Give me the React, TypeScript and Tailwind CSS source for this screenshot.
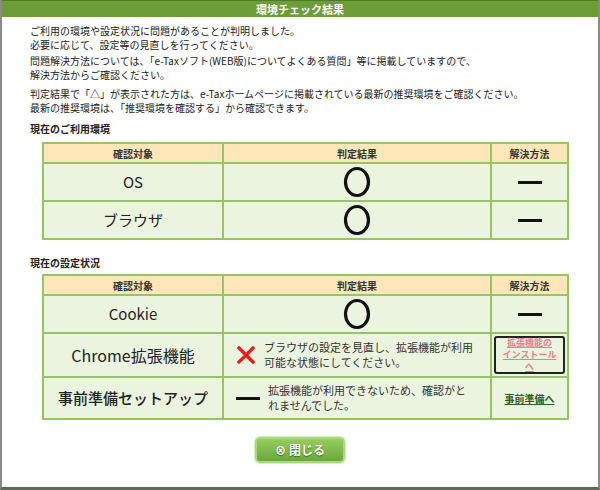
import React from "react";

const jp = { fontFamily: '"Noto Sans CJK JP", "Noto Sans", sans-serif' };

function Circle() {
  return (
    <svg width="30" height="32" viewBox="0 0 30 32" className="mx-auto block">
      <ellipse cx="15" cy="16" rx="11.5" ry="13.5" fill="none" stroke="#111" strokeWidth="3.2" />
    </svg>
  );
}

function Dash({ className = "" }: { className?: string }) {
  return <div className={"h-[3px] w-[24px] bg-[#111] " + className} />;
}

function Cross() {
  return (
    <svg width="20" height="20" viewBox="0 0 20 20" className="shrink-0">
      <path d="M3 3 L17 17 M17 3 L3 17" stroke="#f01818" strokeWidth="3.2" strokeLinecap="square" />
    </svg>
  );
}

function HeadRow() {
  return (
    <tr className="h-[20px] bg-[#fde7b8] text-[10px] font-bold text-[#333]">
      <th className="w-[180px] border-2 border-[#97c466] font-bold">確認対象</th>
      <th className="w-[268px] border-2 border-[#97c466] font-bold">判定結果</th>
      <th className="border-2 border-[#97c466] font-bold">解決方法</th>
    </tr>
  );
}

function OkRow({ label }: { label: string }) {
  return (
    <tr className="h-[38px] bg-[#ebf4df]">
      <td className="border-2 border-[#97c466] text-center text-[15px] text-[#222]">{label}</td>
      <td className="border-2 border-[#97c466]">
        <Circle />
      </td>
      <td className="border-2 border-[#97c466]">
        <Dash className="mx-auto" />
      </td>
    </tr>
  );
}

export default function App() {
  return (
    <div className="h-[490px] w-[600px] bg-white" style={jp}>
      <div className="flex h-[490px] w-[600px] flex-col border-b-[3px] border-l-2 border-r-2 border-b-[#5d6b52] border-l-[#8a8a8a] border-r-[#8a8a8a]">
        <div className="flex h-[17px] shrink-0 items-center justify-center border-t border-[#4f7a24] bg-[#6c9d36] text-[11px] font-bold text-white">
          環境チェック結果
        </div>

        <div className="pl-[28px] pt-[7px] text-[10px] leading-[14px] text-[#222]">
          <p>ご利用の環境や設定状況に問題があることが判明しました。</p>
          <p>必要に応じて、設定等の見直しを行ってください。</p>
          <p className="mt-[2px]">問題解決方法については、「e-Taxソフト(WEB版)についてよくある質問」等に掲載していますので、</p>
          <p>解決方法からご確認ください。</p>
          <p className="mt-[5px]">判定結果で「△」が表示された方は、e-Taxホームページに掲載されている最新の推奨環境をご確認ください。</p>
          <p>最新の推奨環境は、「推奨環境を確認する」から確認できます。</p>
          <p className="mt-[7px] font-bold">現在のご利用環境</p>
        </div>

        <table className="ml-[40px] mt-[6px] w-[527px] border-collapse border-2 border-[#97c466]">
          <tbody>
            <HeadRow />
            <OkRow label="OS" />
            <OkRow label="ブラウザ" />
          </tbody>
        </table>

        <p className="ml-[28px] mt-[16px] text-[10px] font-bold leading-[14px] text-[#222]">現在の設定状況</p>

        <table className="ml-[40px] mt-[4px] w-[527px] border-collapse border-2 border-[#97c466]">
          <tbody>
            <HeadRow />
            <OkRow label="Cookie" />
            <tr className="h-[42px] bg-[#ebf4df]">
              <td className="border-2 border-[#97c466] text-center text-[16px] text-[#222]">Chrome拡張機能</td>
              <td className="border-2 border-[#97c466]">
                <div className="flex items-center gap-[8px] pl-[12px]">
                  <Cross />
                  <p className="text-[11px] leading-[15px] text-[#333]">
                    ブラウザの設定を見直し、拡張機能が利用
                    <br />
                    可能な状態にしてください。
                  </p>
                </div>
              </td>
              <td className="border-2 border-[#97c466] p-[2px]">
                <div className="flex h-[38px] flex-col items-center justify-center rounded-[3px] border-2 border-[#222] text-center text-[9px] font-bold leading-[12px] text-[#f07a90] underline">
                  <span>拡張機能の</span>
                  <span>インストール</span>
                  <span>へ</span>
                </div>
              </td>
            </tr>
            <tr className="h-[42px] bg-[#ebf4df]">
              <td className="border-2 border-[#97c466] text-center text-[15px] font-medium text-[#222]">事前準備セットアップ</td>
              <td className="border-2 border-[#97c466]">
                <div className="flex items-center gap-[8px] pl-[12px]">
                  <Dash className="shrink-0" />
                  <p className="text-[11px] leading-[15px] text-[#333]">
                    拡張機能が利用できないため、確認がと
                    <br />
                    れませんでした。
                  </p>
                </div>
              </td>
              <td className="border-2 border-[#97c466] text-center text-[10px] font-bold text-[#2d5e22] underline">事前準備へ</td>
            </tr>
          </tbody>
        </table>

        <div className="mt-[17px] flex justify-center">
          <button className="flex h-[26px] w-[90px] items-center justify-center gap-[3px] rounded-[5px] border-2 border-[#a9d97c] bg-gradient-to-b from-[#97cc5e] to-[#6aa83a] text-[12px] font-bold text-white shadow-[0_0_0_1px_#d6eec0] [text-shadow:0_1px_1px_#3d6b1e]">
            <span className="text-[11px]">⊗</span>
            閉じる
          </button>
        </div>
      </div>
    </div>
  );
}
